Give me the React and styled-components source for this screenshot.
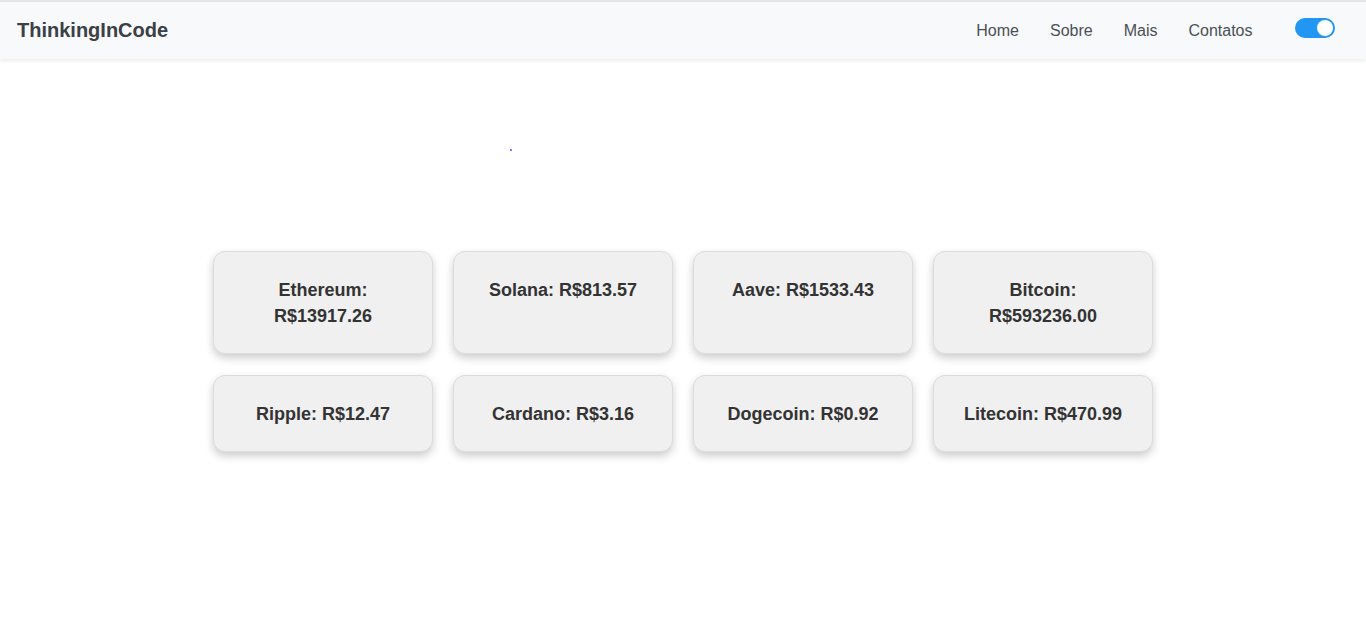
import React from "react";
import styled, { createGlobalStyle } from "styled-components";

const Global = createGlobalStyle`
  html, body { margin: 0; padding: 0; }
  body {
    font-family: "Liberation Sans", Arial, sans-serif;
    background: #ffffff;
    color: #333;
  }
  #root { min-height: 100vh; }
`;

const Page = styled.div`
  position: relative;
  display: flex;
  flex-direction: column;
  height: 100vh;
`;

const Nav = styled.nav`
  display: flex;
  align-items: center;
  height: 57px;
  border-top: 2px solid #e3e5e8;
  background: #f8f9fa;
  padding: 0 31px 0 17px;
  box-shadow: 0 2px 4px rgba(0, 0, 0, 0.08);
  position: relative;
  z-index: 1;
`;

const Brand = styled.a`
  font-size: 20px;
  font-weight: bold;
  color: #3b4046;
  text-decoration: none;
`;

const Links = styled.ul`
  display: flex;
  list-style: none;
  margin: 0 0 0 auto;
  padding: 0;
`;

const LinkItem = styled.li`
  padding: 0 15.5px;
  font-size: 16px;
  color: #4a4f55;
`;

const Toggle = styled.label`
  position: relative;
  display: inline-block;
  width: 40px;
  height: 20px;
  border-radius: 10px;
  background: #2196f3;
  margin-left: 27px;
  margin-bottom: 6px;
  flex-shrink: 0;
`;

const Knob = styled.span`
  position: absolute;
  top: 2px;
  right: 2px;
  width: 16px;
  height: 16px;
  border-radius: 50%;
  background: #ffffff;
`;

const Main = styled.main`
  flex: 1;
  display: flex;
  align-items: center;
  justify-content: center;
`;

const Grid = styled.div`
  display: grid;
  grid-template-columns: repeat(4, 220px);
  gap: 21px 20px;
`;

const Card = styled.div`
  box-sizing: border-box;
  background: #f0f0f0;
  border: 1px solid #dcdcdc;
  border-radius: 12px;
  padding: 25px 20px 24px;
  box-shadow: 0 4px 8px rgba(0, 0, 0, 0.2);
  text-align: center;
  font-size: 18px;
  line-height: 26px;
  font-weight: bold;
  color: #333;
`;

const Dot = styled.span`
  position: absolute;
  left: 510px;
  top: 149px;
  width: 2px;
  height: 2px;
  background: #5a5aff;
  opacity: 0.8;
`;

const coins = [
  ["Ethereum", "13917.26"],
  ["Solana", "813.57"],
  ["Aave", "1533.43"],
  ["Bitcoin", "593236.00"],
  ["Ripple", "12.47"],
  ["Cardano", "3.16"],
  ["Dogecoin", "0.92"],
  ["Litecoin", "470.99"],
];

export default function App() {
  return (
    <>
      <Global />
      <Page>
        <Nav>
          <Brand href="#">ThinkingInCode</Brand>
          <Links>
            {["Home", "Sobre", "Mais", "Contatos"].map((l) => (
              <LinkItem key={l}>{l}</LinkItem>
            ))}
          </Links>
          <Toggle>
            <Knob />
          </Toggle>
        </Nav>
        <Dot />
        <Main>
          <Grid>
            {coins.map(([name, price]) => (
              <Card key={name}>
                {name}: R${price}
              </Card>
            ))}
          </Grid>
        </Main>
      </Page>
    </>
  );
}
